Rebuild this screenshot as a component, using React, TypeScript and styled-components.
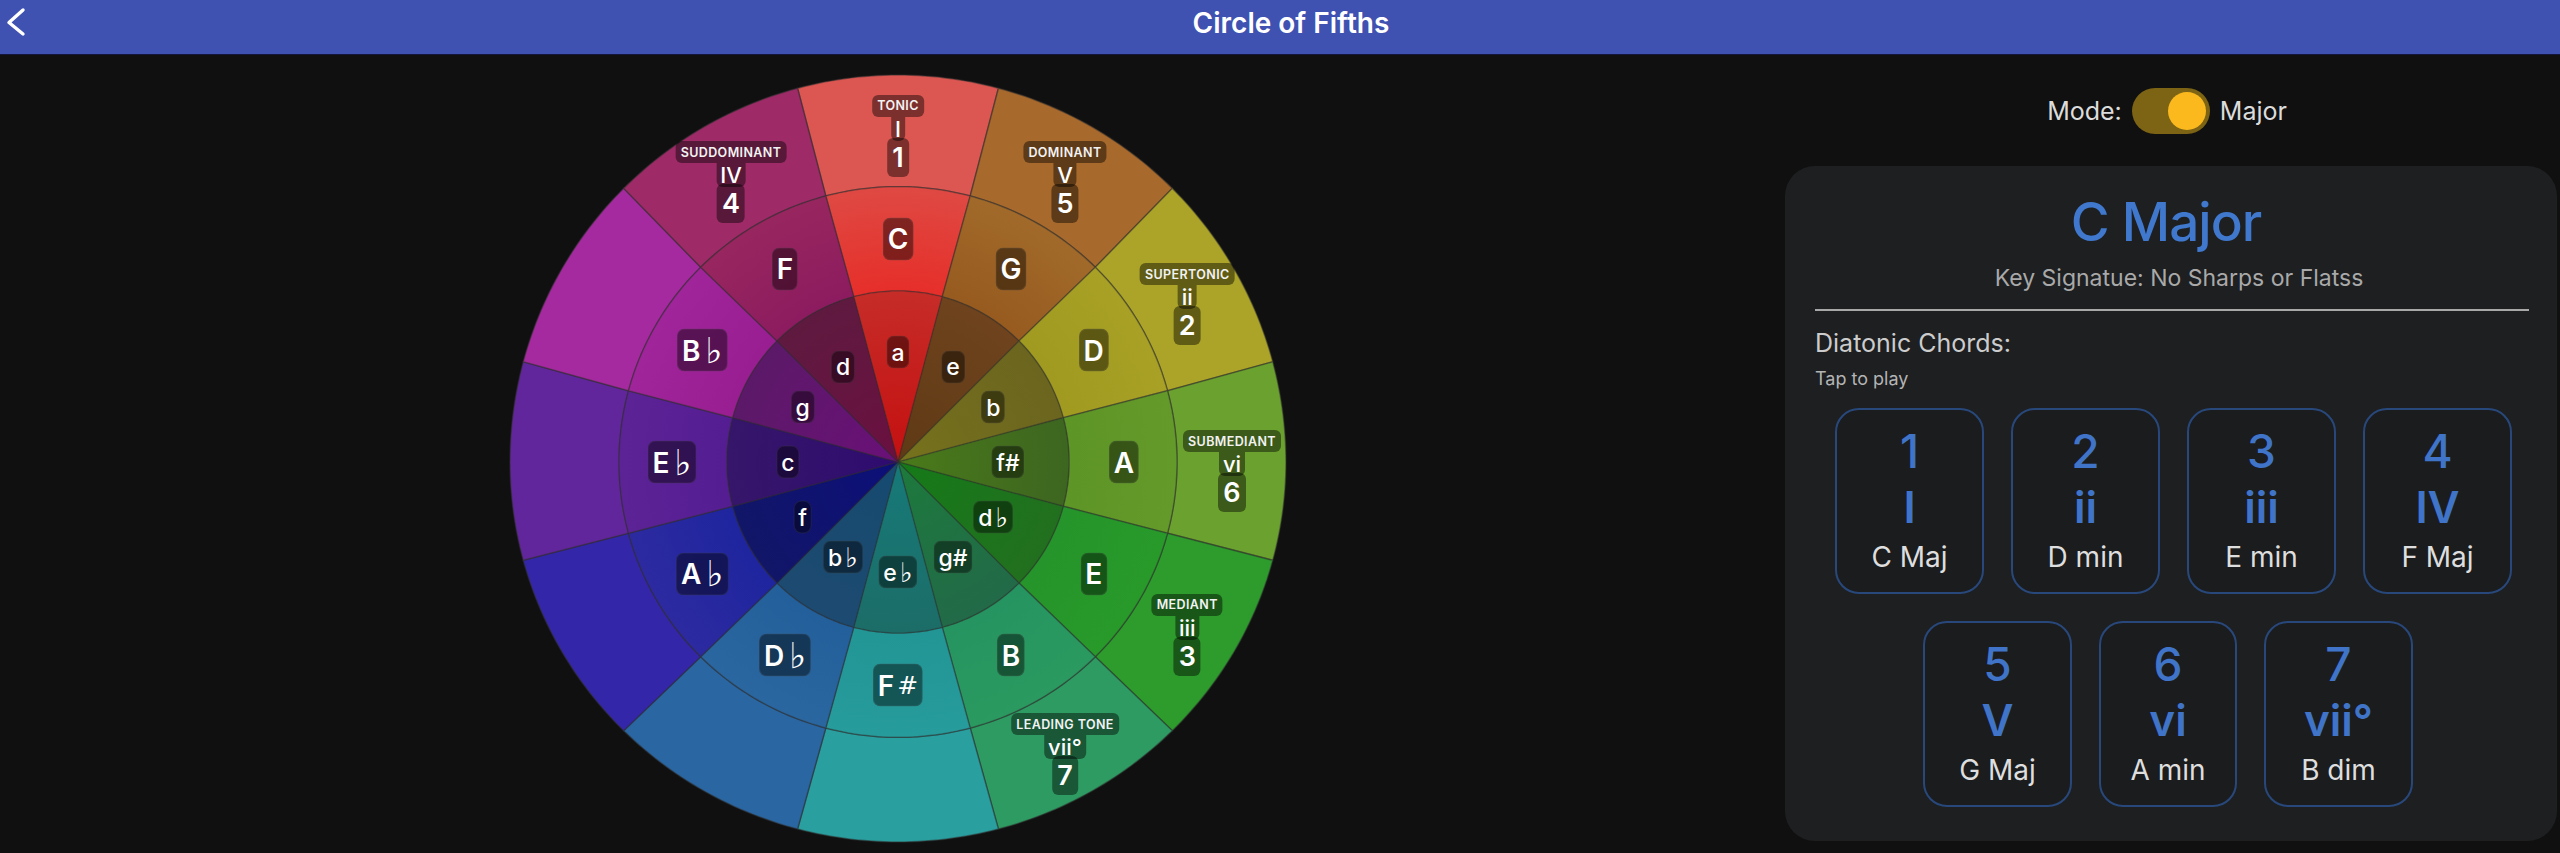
import React from "react";
import styled, { createGlobalStyle } from "styled-components";

const Global = createGlobalStyle`
  html, body { margin: 0; padding: 0; background: #101010; }
  body { font-family: "Inter", "DejaVu Sans", sans-serif; overflow: hidden; }
`;

const Page = styled.div`
  width: 2560px;
  height: 853px;
  overflow: hidden;
  background: #101010;
  display: flex;
  flex-direction: column;
`;

const Header = styled.header`
  position: relative;
  flex: 0 0 55px;
  box-sizing: border-box;
  height: 55px;
  background: #3f51b1;
  border-bottom: 1px solid #14163c;
  display: flex;
  align-items: center;
  justify-content: center;
  padding: 0 0 8px 22px;
`;

const BackIcon = styled.svg`
  position: absolute;
  left: 6px;
  top: 6px;
  width: 20px;
  height: 32px;
`;

const HeaderTitle = styled.h1`
  margin: 0;
  color: #fff;
  font-size: 28px;
  line-height: 34px;
  font-weight: 600;
`;

const Body = styled.main`
  flex: 1;
  display: flex;
  align-items: flex-start;
  padding-left: 510px;
`;

const Wheel = styled.div`
  position: relative;
  flex: 0 0 776px;
  width: 776px;
  height: 768px;
  margin-top: 20px;
`;

const WheelSvg = styled.svg`
  display: block;
  width: 776px;
  height: 768px;
  overflow: visible;
`;

const Pill = styled.div`
  position: absolute;
  transform: translate(-50%, -50%);
  box-sizing: border-box;
  display: flex;
  align-items: center;
  justify-content: center;
  background: rgba(0, 0, 0, 0.44);
  border: 1px solid rgba(255, 255, 255, 0.07);
  color: #fff;
  white-space: nowrap;
`;

const KeyPill = styled(Pill)`
  height: 43px;
  padding: 0 4px;
  border-radius: 8px;
  font-size: 28px;
  font-weight: 600;
`;

const MinorPill = styled(Pill)`
  height: 33px;
  padding: 0 4px;
  border-radius: 8px;
  font-size: 23px;
  font-weight: 500;
`;

const Accidental = styled.span<{ $gap: number; $size: number }>`
  font-family: "DejaVu Sans", sans-serif;
  font-weight: 400;
  font-size: ${(p) => p.$size}px;
  line-height: 1;
  margin-left: ${(p) => p.$gap}px;
`;

const DegreeStack = styled.div`
  position: absolute;
  transform: translateX(-50%);
  display: flex;
  flex-direction: column;
  align-items: center;
  color: #fff;
`;

const DegreeName = styled.div`
  height: 22px;
  padding: 0 5px;
  border-radius: 6px;
  background: rgba(0, 0, 0, 0.44);
  display: flex;
  align-items: center;
  font-size: 12.5px;
  font-weight: 600;
  letter-spacing: 0.4px;
  white-space: nowrap;
  color: #f2f2f2;
`;

const DegreeRoman = styled.div`
  height: 24px;
  padding: 0 4px;
  border-radius: 0 0 6px 6px;
  background: rgba(0, 0, 0, 0.44);
  display: flex;
  align-items: center;
  font-size: 22px;
  font-weight: 500;
`;

const DegreeNumber = styled.div`
  height: 39px;
  margin-top: -3px;
  padding: 0 5px;
  border-radius: 6px;
  background: rgba(0, 0, 0, 0.44);
  display: flex;
  align-items: center;
  font-size: 27px;
  font-weight: 600;
`;

const Side = styled.aside`
  margin-left: auto;
  margin-right: 3px;
  width: 772px;
  display: flex;
  flex-direction: column;
`;

const ModeRow = styled.div`
  margin-top: 33px;
  height: 46px;
  padding-right: 8px;
  display: flex;
  align-items: center;
  justify-content: center;
  gap: 10px;
  color: #dcdcdc;
  font-size: 25px;
`;

const Toggle = styled.div`
  box-sizing: border-box;
  width: 78px;
  height: 46px;
  border-radius: 23px;
  background: #7d6314;
  display: flex;
  align-items: center;
  justify-content: flex-end;
  padding-right: 4px;
`;

const Thumb = styled.div`
  width: 38px;
  height: 38px;
  border-radius: 50%;
  background: #fbb91e;
`;

const Panel = styled.section`
  box-sizing: border-box;
  margin-top: 32px;
  height: 675px;
  padding: 22px 28px 0 30px;
  background: #1d1f21;
  border-radius: 30px;
  display: flex;
  flex-direction: column;
`;

const KeyTitle = styled.h2`
  margin: 0;
  padding-right: 12px;
  text-align: center;
  color: #3f78cc;
  font-size: 53px;
  letter-spacing: -1px;
  line-height: 68px;
  font-weight: 500;
`;

const KeySignature = styled.p`
  margin: 6px 0 0;
  padding-left: 14px;
  text-align: center;
  color: #a9a9a9;
  font-size: 23px;
  line-height: 32px;
`;

const Divider = styled.hr`
  margin: 15px 0 0;
  height: 2px;
  border: 0;
  background: #a8a8a8;
`;

const SectionTitle = styled.div`
  margin-top: 16px;
  color: #cccccc;
  font-size: 25px;
  line-height: 32px;
`;

const Hint = styled.div`
  margin-top: 9px;
  color: #b4b4b4;
  font-size: 18px;
  line-height: 22px;
`;

const ChordRow = styled.div<{ $first?: boolean }>`
  margin-top: ${(p) => (p.$first ? 18 : 27)}px;
  padding-left: ${(p) => (p.$first ? 3 : 0)}px;
  padding-right: ${(p) => (p.$first ? 0 : 8)}px;
  display: flex;
  justify-content: center;
  gap: 27px;
`;

const ChordCard = styled.button<{ $narrow?: boolean }>`
  box-sizing: border-box;
  width: ${(p) => (p.$narrow ? 138 : 149)}px;
  height: 186px;
  padding: 14px 0 0;
  background: #1b1c1e;
  border: 2px solid #28487c;
  border-radius: 24px;
  font-family: inherit;
  display: flex;
  flex-direction: column;
  align-items: center;
`;

const ChordNumber = styled.div`
  color: #3f74c8;
  font-size: 46px;
  line-height: 54px;
  font-weight: 500;
`;

const ChordRoman = styled.div`
  margin-top: 2px;
  color: #3f74c8;
  font-size: 44px;
  line-height: 54px;
  font-weight: 600;
`;

const ChordName = styled.div`
  margin-top: 5px;
  color: #dedede;
  font-size: 28px;
  line-height: 36px;
`;

type Hue = { outer: string; midA: string; midB: string; innerA: string; innerB: string };

const hues: Hue[] = [
  { outer: "#dc5751", midA: "#df4a44", midB: "#e62f2a", innerA: "#c62c28", innerB: "#c41010" },
  { outer: "#a8692c", midA: "#a16a2a", midB: "#975b20", innerA: "#6e431d", innerB: "#5f3a15" },
  { outer: "#aca428", midA: "#a8a126", midB: "#a09a20", innerA: "#6b651f", innerB: "#76721c" },
  { outer: "#6ba12e", midA: "#649a2a", midB: "#5d9526", innerA: "#3d6620", innerB: "#4a7a1a" },
  { outer: "#2d9c2c", midA: "#289a2a", midB: "#25942a", innerA: "#22701f", innerB: "#157a18" },
  { outer: "#2e9c62", midA: "#2b9a60", midB: "#259460", innerA: "#226a48", innerB: "#1d7a3c" },
  { outer: "#2a9f9f", midA: "#279c9c", midB: "#229595", innerA: "#1c6d68", innerB: "#167a78" },
  { outer: "#2a66a2", midA: "#2a67a0", midB: "#235f9a", innerA: "#1d4a70", innerB: "#164a70" },
  { outer: "#3426a8", midA: "#2d2aa0", midB: "#1e259e", innerA: "#121668", innerB: "#0c0f78" },
  { outer: "#62269c", midA: "#5c2396", midB: "#541d92", innerA: "#36166a", innerB: "#2e0c70" },
  { outer: "#a62a9f", midA: "#a0259a", midB: "#981e92", innerA: "#5c1968", innerB: "#6a1078" },
  { outer: "#9e2b67", midA: "#98265f", midB: "#8c1c5f", innerA: "#5f1a40", innerB: "#6a1040" },
];

const CX = 388;
const CY = 387;
const R_OUTER = 388;
const R_MID = 279;
const R_INNER = 171;

const rad = (deg: number) => (deg * Math.PI) / 180;

const point = (deg: number, r: number, squash = false) => {
  const s = Math.sin(rad(deg));
  const c = Math.cos(rad(deg));
  const yr = squash ? (c > 0 ? 387 : 380) * (r / R_OUTER) : r * (r > 200 ? 0.987 : 1);
  return { x: CX + r * s, y: CY - yr * c };
};

const sector = (i: number, r0: number, r1: number, squash = false) => {
  const start = i * 30 - 15;
  const pts: string[] = [];
  for (let a = 0; a <= 30; a += 1) {
    const p = point(start + a, r1, squash);
    pts.push(`${p.x.toFixed(2)},${p.y.toFixed(2)}`);
  }
  if (r0 === 0) {
    pts.push(`${CX},${CY}`);
  } else {
    for (let a = 30; a >= 0; a -= 1) {
      const p = point(start + a, r0);
      pts.push(`${p.x.toFixed(2)},${p.y.toFixed(2)}`);
    }
  }
  return `M${pts.join("L")}Z`;
};

const majors: [string, string?][] = [
  ["C"], ["G"], ["D"], ["A"], ["E"], ["B"], ["F", "#"], ["D", "♭"], ["A", "♭"], ["E", "♭"], ["B", "♭"], ["F"],
];
const minors: [string, string?][] = [
  ["a"], ["e"], ["b"], ["f#"], ["d", "♭"], ["g#"], ["e", "♭"], ["b", "♭"], ["f"], ["c"], ["g"], ["d"],
];

const degrees = [
  { pos: 0, name: "TONIC", roman: "I", num: "1" },
  { pos: 1, name: "DOMINANT", roman: "V", num: "5" },
  { pos: 2, name: "SUPERTONIC", roman: "ii", num: "2" },
  { pos: 3, name: "SUBMEDIANT", roman: "vi", num: "6" },
  { pos: 4, name: "MEDIANT", roman: "iii", num: "3" },
  { pos: 5, name: "LEADING TONE", roman: "vii°", num: "7" },
  { pos: 11, name: "SUDDOMINANT", roman: "IV", num: "4" },
];

const chordsTop = [
  { n: "1", r: "I", c: "C Maj" },
  { n: "2", r: "ii", c: "D min" },
  { n: "3", r: "iii", c: "E min" },
  { n: "4", r: "IV", c: "F Maj" },
];
const chordsBottom = [
  { n: "5", r: "V", c: "G Maj" },
  { n: "6", r: "vi", c: "A min", narrow: true },
  { n: "7", r: "vii°", c: "B dim" },
];

const Chord = ({ n, r, c, narrow }: { n: string; r: string; c: string; narrow?: boolean }) => (
  <ChordCard $narrow={narrow}>
    <ChordNumber>{n}</ChordNumber>
    <ChordRoman>{r}</ChordRoman>
    <ChordName>{c}</ChordName>
  </ChordCard>
);

export default function App() {
  return (
    <Page>
      <Global />
      <Header>
        <BackIcon viewBox="0 0 20 32" fill="none">
          <path d="M17 4 L3 16.5 L17 28" stroke="#fff" strokeWidth="3.4" strokeLinecap="round" strokeLinejoin="round" />
        </BackIcon>
        <HeaderTitle>Circle of Fifths</HeaderTitle>
      </Header>
      <Body>
        <Wheel>
          <WheelSvg viewBox="0 0 776 768">
            <defs>
              {hues.map((h, i) => (
                <React.Fragment key={i}>
                  <radialGradient id={`mid${i}`} gradientUnits="userSpaceOnUse" cx={CX} cy={CY} r={R_MID}>
                    <stop offset="0.62" stopColor={h.midB} />
                    <stop offset="1" stopColor={h.midA} />
                  </radialGradient>
                  <radialGradient id={`inner${i}`} gradientUnits="userSpaceOnUse" cx={CX} cy={CY} r={R_INNER}>
                    <stop offset="0" stopColor={h.innerB} />
                    <stop offset="1" stopColor={h.innerA} />
                  </radialGradient>
                </React.Fragment>
              ))}
            </defs>
            {hues.map((h, i) => (
              <path key={`o${i}`} d={sector(i, R_MID, R_OUTER, true)} fill={h.outer} stroke="rgba(48,48,48,0.5)" strokeWidth="1.5" />
            ))}
            {hues.map((_, i) => (
              <path key={`m${i}`} d={sector(i, R_INNER, R_MID)} fill={`url(#mid${i})`} stroke="rgba(48,48,48,0.45)" strokeWidth="1.5" />
            ))}
            {hues.map((_, i) => (
              <path key={`i${i}`} d={sector(i, 0, R_INNER)} fill={`url(#inner${i})`} stroke="rgba(48,48,48,0.35)" strokeWidth="1.5" />
            ))}
          </WheelSvg>
          {majors.map(([t, acc], i) => {
            const p = point(i * 30, 226);
            return (
              <KeyPill key={i} style={{ left: p.x, top: p.y }}>
                {t}
                {acc && <Accidental $gap={acc === "♭" ? 5 : 3} $size={acc === "♭" ? 36 : 25}>{acc}</Accidental>}
              </KeyPill>
            );
          })}
          {minors.map(([t, acc], i) => {
            const p = point(i * 30, 110);
            return (
              <MinorPill key={i} style={{ left: p.x, top: p.y }}>
                {t}
                {acc && <Accidental $gap={3} $size={27}>{acc}</Accidental>}
              </MinorPill>
            );
          })}
          {degrees.map((d) => {
            const p = point(d.pos * 30, 334, true);
            return (
              <DegreeStack key={d.name} style={{ left: p.x, top: p.y - (d.pos === 0 ? 34 : 32) }}>
                <DegreeName>{d.name}</DegreeName>
                <DegreeRoman>{d.roman}</DegreeRoman>
                <DegreeNumber>{d.num}</DegreeNumber>
              </DegreeStack>
            );
          })}
        </Wheel>
        <Side>
          <ModeRow>
            <span>Mode:</span>
            <Toggle>
              <Thumb />
            </Toggle>
            <span>Major</span>
          </ModeRow>
          <Panel>
            <KeyTitle>C Major</KeyTitle>
            <KeySignature>Key Signatue: No Sharps or Flatss</KeySignature>
            <Divider />
            <SectionTitle>Diatonic Chords:</SectionTitle>
            <Hint>Tap to play</Hint>
            <ChordRow $first>
              {chordsTop.map((c) => (
                <Chord key={c.n} {...c} />
              ))}
            </ChordRow>
            <ChordRow>
              {chordsBottom.map((c) => (
                <Chord key={c.n} {...c} />
              ))}
            </ChordRow>
          </Panel>
        </Side>
      </Body>
    </Page>
  );
}
